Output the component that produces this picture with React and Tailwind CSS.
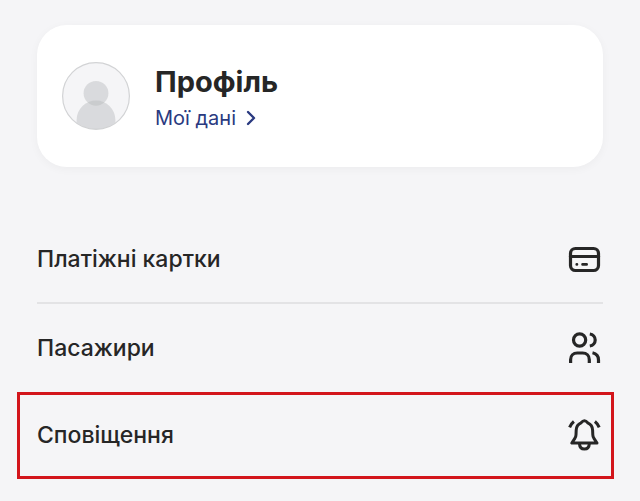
import React from 'react';

const CardIcon = () => (
  <svg className="size-[38px] shrink-0" viewBox="0 0 38 38" fill="none" stroke="currentColor" strokeWidth="3.2" strokeLinecap="round" aria-hidden="true">
    <rect x="5.5" y="8.5" width="28" height="22" rx="5" />
    <path d="M5.5 16.5h28" />
    <path d="M11.8 24.4h.1M17.6 24.4h4" strokeWidth="2.8" />
  </svg>
);

const PassengersIcon = () => (
  <svg className="size-[38px] shrink-0" viewBox="0 0 38 38" fill="none" stroke="currentColor" strokeWidth="3.2" strokeLinejoin="round" aria-hidden="true">
    <circle cx="14.6" cy="11" r="6.1" />
    <path d="M5.6 34v-3.3c0-4 2.7-6.7 6.7-6.7h5.3c4 0 6.7 2.7 6.7 6.7V34" />
    <path d="M24.8 5c3.2.5 5.4 3 5.4 6s-2.2 5.500-5.4 6" />
    <path d="M27.5 23.8c3.7.8 6 3.5 6 7.200v3" />
  </svg>
);

const BellIcon = () => (
  <svg className="size-[38px] shrink-0" viewBox="0 0 38 38" fill="none" stroke="currentColor" strokeWidth="3" strokeLinejoin="round" aria-hidden="true">
    <path d="M19.4 3.8c-1.5 0-2.3.8-3.3 2-3.1 1.3-4.8 4-4.9 7.2l-.2 4.700c0 1.500-.4 2.600-1.300 3.900l-2.900 4.400h25.200l-2.900-4.400c-.9-1.300-1.300-2.400-1.300-3.900l-.2-4.700c-.1-3.200-1.800-5.900-4.900-7.200-1-1.200-1.800-2-3.300-2z" />
    <path d="M14.4 26.300c.2 3.600 2 5.700 5 5.700s4.800-2.100 5-5.700" />
    <path d="M4.600 10.400c.9-2.400 2.300-4.300 4.300-5.900M34.200 10.400c-.9-2.400-2.300-4.300-4.300-5.900" />
  </svg>
);

const Avatar = () => (
  <svg className="size-[68px] shrink-0" viewBox="0 0 68 68" aria-hidden="true">
    <defs>
      <clipPath id="avatar-clip">
        <circle cx="34" cy="34" r="33" />
      </clipPath>
    </defs>
    <circle cx="34" cy="34" r="33.4" fill="#f5f5f7" stroke="#d2d3d5" strokeWidth="1.2" />
    <g clipPath="url(#avatar-clip)" fill="#b9babd" fillOpacity="0.45">
      <circle cx="34" cy="31.3" r="12.4" />
      <path d="M14.6 58a19.4 19.4 0 0 1 38.8 0v10H14.6z" />
    </g>
  </svg>
);

const menuItems = [
  { label: 'Платіжні картки', href: '#cards', icon: CardIcon, divider: true },
  { label: 'Пасажири', href: '#passengers', icon: PassengersIcon },
  { label: 'Сповіщення', href: '#notifications', icon: BellIcon, highlight: true },
];

const App = () => {
  return (
    <main className="min-h-screen bg-[#f5f5f7] px-[37px] pt-[25px] pb-5 font-['Inter',sans-serif] text-[#262626]">

      {/* Profile card */}
      <section className="flex h-[142px] items-center gap-[25px] rounded-[30px] bg-white px-[25px] shadow-[0_2px_10px_rgba(0,0,0,0.04)]">
        <Avatar />
        <div className="pt-2">
          <h1 className="text-[29px] leading-9 font-bold">Профіль</h1>
          <a href="#profile" className="flex items-center gap-[10px] text-xl leading-9 text-[#2a3a80]">
            Мої дані
            <svg className="h-4 w-[10px]" viewBox="0 0 10 16" fill="none" stroke="currentColor" strokeWidth="2.4" strokeLinecap="round" strokeLinejoin="round" aria-hidden="true">
              <path d="M2 2l6 6-6 6" />
            </svg>
          </a>
        </div>
      </section>

      {/* Menu */}
      <nav className="mt-[49px]">
        {menuItems.map(({ label, href, icon: Icon, divider, highlight }) => (
          <a
            key={href}
            href={href}
            className={`flex items-center justify-between text-[23px] font-medium ${
              divider ? 'border-b-2 border-[#e3e3e5]' : ''
            } ${highlight ? '-mr-[11px] -ml-5 h-[87px] border-3 border-[#d3151b] pr-2 pl-[17px]' : 'h-[88px]'}`}
          >
            {label}
            <Icon />
          </a>
        ))}
      </nav>
    </main>
  );
};

export default App;
